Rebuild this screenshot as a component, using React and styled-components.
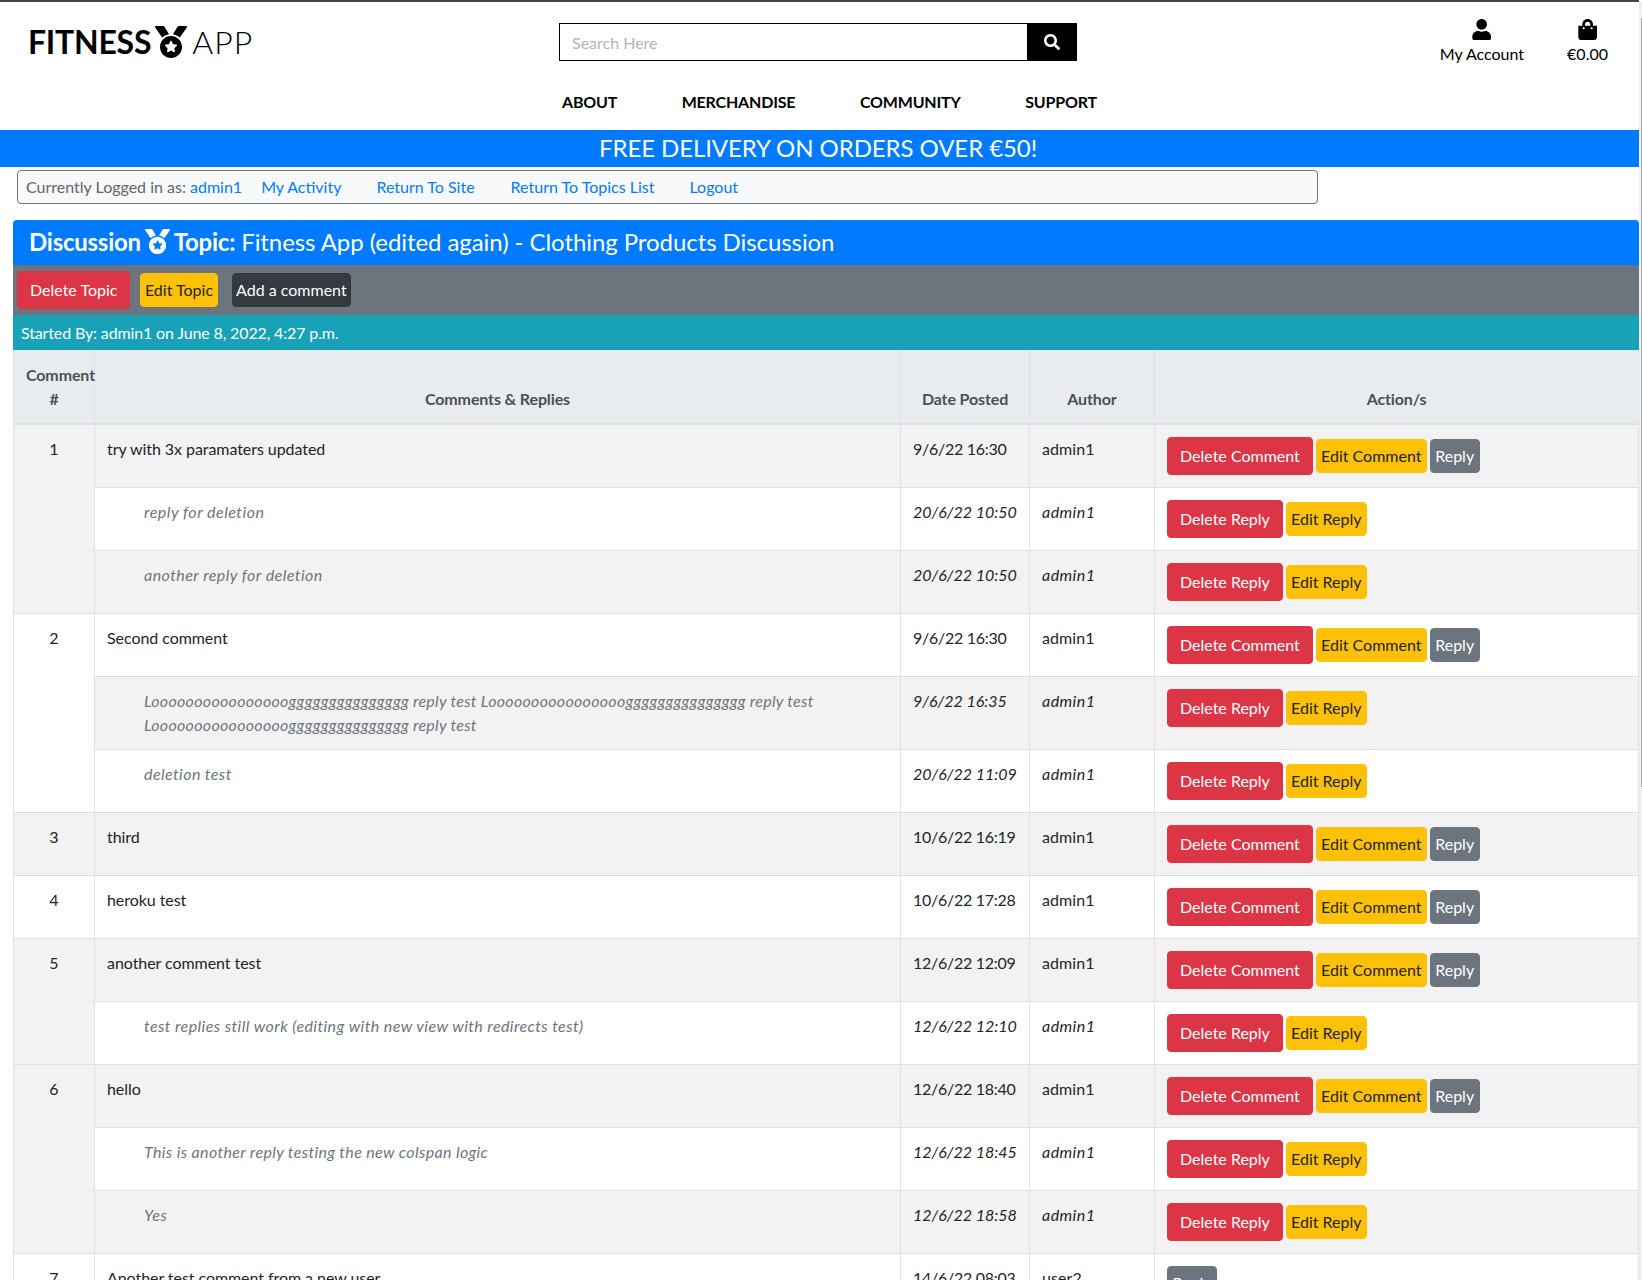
import React from 'react';
import styled, { createGlobalStyle } from 'styled-components';
import { FaMedal, FaSearch, FaUser, FaShoppingBag } from 'react-icons/fa';

const Global = createGlobalStyle`
  html, body { margin: 0; padding: 0; height: 1280px; overflow: hidden; background: #fff; }
  body { font-family: Lato, "Liberation Sans", sans-serif; font-size: 16px; line-height: 24px; color: #212529; }
  * { box-sizing: border-box; }
`;

const Page = styled.div`
  width: 1639px;
  border-top: 2px solid #444;
`;
const ScrollTrack = styled.div`
  position: fixed; top: 2px; right: 0; width: 3px; bottom: 0; background: #f0f0f0;
`;
const ScrollThumb = styled.div`
  position: absolute; top: 16px; right: 0; width: 1px; height: 769px; background: #a8a8a8;
`;

const Header = styled.header`
  display: grid;
  grid-template-columns: 559px 518px 1fr;
  grid-template-rows: 85px 43px;
  height: 128px;
`;
const Logo = styled.a`
  display: flex; align-items: center; gap: 4px;
  padding: 23px 0 0 28px; height: 57px;
  font-size: 32px; line-height: 32px; color: #000;
`;
const LogoStrong = styled.span` font-weight: 700; letter-spacing: -0.25px; `;
const LogoLight = styled.span` font-weight: 300; letter-spacing: 1px; margin-left: 1px; `;
const LogoMedal = styled(FaMedal)` font-size: 32px; `;

const SearchCol = styled.div` grid-column: 2; padding-top: 21px; `;
const SearchForm = styled.form` display: flex; height: 38px; border: 1px solid #000; border-right: 0; `;
const SearchInput = styled.input`
  flex: 1; min-width: 0; border: 0; outline: 0; padding: 2px 12px 0;
  font: 16px/24px Lato, sans-serif; color: #495057;
  &::placeholder { color: #adb5bd; opacity: 1; }
`;
const SearchButton = styled.button`
  width: 50px; margin: -1px 0; border: 0; background: #000; color: #fff; padding: 0;
  display: flex; align-items: center; justify-content: center; font-size: 16px;
`;
const Account = styled.div`
  grid-column: 3; display: flex; justify-content: flex-end; gap: 43px; padding: 16px 31px 0 0; color: #000;
`;
const AccountLink = styled.a`
  display: flex; flex-direction: column; align-items: center; line-height: 24px;
  svg { font-size: 21.33px; margin: 1px 0 2px; }
`;
const Nav = styled.nav`
  grid-column: 1 / -1; display: flex; gap: 64.5px; padding: 3px 0 0 562px;
`;
const NavLink = styled.a`
  font-weight: 700; font-size: 16px; color: #000; text-transform: uppercase; line-height: 24px; letter-spacing: -0.18px;
`;

const Banner = styled.div`
  background: #007bff; color: #fff; height: 37px; display: flex; align-items: center; justify-content: center;
  font-size: 24px; line-height: 35px; padding: 0 3px 2px 0; letter-spacing: -0.08px;
`;

const UserBar = styled.div`
  width: 1301px; height: 34px; margin: 3px 0 16px 17px; padding: 0 8px;
  display: flex; align-items: center; background: #f8f9fa; border: 1px solid #6c757d; border-radius: 4px;
`;
const UserLabel = styled.span` color: #5f666d; `;
const UserLink = styled.a` color: #007bff; margin-left: ${p => p.$gap}px; `;

const Section = styled.main` margin-left: 13px; `;
const TopicTitle = styled.h1`
  margin: 0; height: 45px; padding: 0 16px 2px; background: #007bff; color: #fff;
  border-radius: 4px 4px 0 0; display: flex; align-items: center; gap: 4px;
  font-size: 24px; font-weight: 400; line-height: 43px; white-space: pre;
`;
const TitleStrong = styled.strong` font-weight: 700; letter-spacing: -0.25px; `;
const TitleRest = styled.span` letter-spacing: -0.07px; `;
const TitleMedal = styled(FaMedal)` font-size: 25px; `;
const ActionBar = styled.div`
  height: 50px; background: #6c757d; padding: 6px 4px; display: flex; align-items: center; gap: 10px;
`;
const Btn = styled.button`
  display: inline-block; font: 400 16px/24px Lato, sans-serif; white-space: nowrap; text-align: center;
  border-radius: 4px; border: 1px solid ${p => p.$bg};
  background: ${p => p.$bg}; color: ${p => p.$fg};
  padding: ${p => p.$big ? '6px 12px' : p.$tight ? '4px 3.5px' : '4px'};
`;
const Danger = (p) => <Btn $bg="#dc3545" $fg="#fff" $big {...p} />;
const Warn = (p) => <Btn $bg="#ffc107" $fg="#212529" {...p} />;
const ReplyBtn = styled(Btn)` min-width: 50px; `;
const Grey = (p) => <ReplyBtn $bg="#6c757d" $fg="#fff" {...p} />;
const AddComment = styled(Btn)` margin-left: 4px; `;

const Started = styled.div`
  height: 35px; background: #17a2b8; color: #fff; padding: 0 8px; display: flex; align-items: center; letter-spacing: -0.14px;
`;
const Table = styled.table`
  width: 100%; table-layout: fixed; border-collapse: collapse; color: #212529;
  border-left: 1px solid #dee2e6;
`;
const Th = styled.th`
  background: #e9ecef; color: #495057; font-weight: 700; text-align: center; vertical-align: bottom;
  padding: 13px 12px 12px; border: 1px solid #dee2e6; border-top: 0; border-bottom-width: 2px; letter-spacing: -0.12px;
`;
const Tr = styled.tr` background: ${p => p.$striped ? '#f2f2f2' : '#fff'}; `;
const Td = styled.td`
  padding: 12px; vertical-align: top; border: 1px solid #dee2e6;
  text-align: ${p => p.$center ? 'center' : 'left'};
`;
const CommentCell = styled(Td)` letter-spacing: -0.06px; `;
const DateCell = styled(Td)`
  white-space: nowrap;
  font-style: ${p => p.$reply ? 'italic' : 'normal'};
  letter-spacing: ${p => p.$reply ? '0' : '-0.27px'};
`;
const AuthorCell = styled(Td)`
  font-style: ${p => p.$reply ? 'italic' : 'normal'};
  letter-spacing: ${p => p.$reply ? '0.45px' : '0.1px'};
`;
const ReplyText = styled.div`
  padding-left: 37px; color: #6c757d; font-style: italic;
  letter-spacing: ${p => p.$tracking}px;
`;
const ActionGroup = styled.div` display: flex; align-items: center; gap: 3.2px; `;

const groups = [
  { n: 1, text: 'try with 3x paramaters updated', date: '9/6/22 16:30', author: 'admin1', replies: [
    ['reply for deletion', '20/6/22 10:50', 'admin1', 0.5],
    ['another reply for deletion', '20/6/22 10:50', 'admin1', 0.45],
  ]},
  { n: 2, text: 'Second comment', date: '9/6/22 16:30', author: 'admin1', replies: [
    ['Looooooooooooooooggggggggggggggg reply test Looooooooooooooooggggggggggggggg reply test Looooooooooooooooggggggggggggggg reply test', '9/6/22 16:35', 'admin1', 0.28],
    ['deletion test', '20/6/22 11:09', 'admin1', 0.42],
  ]},
  { n: 3, text: 'third', date: '10/6/22 16:19', author: 'admin1', replies: [] },
  { n: 4, text: 'heroku test', date: '10/6/22 17:28', author: 'admin1', replies: [] },
  { n: 5, text: 'another comment test', date: '12/6/22 12:09', author: 'admin1', replies: [
    ['test replies still work (editing with new view with redirects test)', '12/6/22 12:10', 'admin1', 0.41],
  ]},
  { n: 6, text: 'hello', date: '12/6/22 18:40', author: 'admin1', replies: [
    ['This is another reply testing the new colspan logic', '12/6/22 18:45', 'admin1', 0.35],
    ['Yes', '12/6/22 18:58', 'admin1', 0.5],
  ]},
  { n: 7, text: 'Another test comment from a new user', date: '14/6/22 08:03', author: 'user2', replyOnly: true, replies: [] },
];

function rows() {
  let i = 0;
  const out = [];
  groups.forEach((g) => {
    out.push(
      <Tr key={g.n} $striped={i % 2 === 0}>
        <Td $center rowSpan={g.replies.length + 1}>{g.n}</Td>
        <CommentCell>{g.text}</CommentCell>
        <DateCell>{g.date}</DateCell>
        <AuthorCell>{g.author}</AuthorCell>
        <Td>
          <ActionGroup>
            {g.replyOnly ? <Grey>Reply</Grey> : <>
              <Danger>Delete Comment</Danger><Warn>Edit Comment</Warn><Grey>Reply</Grey>
            </>}
          </ActionGroup>
        </Td>
      </Tr>
    );
    i++;
    g.replies.forEach((r, k) => {
      out.push(
        <Tr key={g.n + '-' + k} $striped={i % 2 === 0}>
          <Td><ReplyText $tracking={r[3]}>{r[0]}</ReplyText></Td>
          <DateCell $reply>{r[1]}</DateCell>
          <AuthorCell $reply>{r[2]}</AuthorCell>
          <Td><ActionGroup><Danger>Delete Reply</Danger><Warn>Edit Reply</Warn></ActionGroup></Td>
        </Tr>
      );
      i++;
    });
  });
  return out;
}

export default function App() {
  return (
    <Page>
      <Global />
      <ScrollTrack><ScrollThumb /></ScrollTrack>
      <Header>
        <Logo>
          <LogoStrong>FITNESS</LogoStrong>
          <LogoMedal />
          <LogoLight>APP</LogoLight>
        </Logo>
        <SearchCol>
          <SearchForm>
            <SearchInput placeholder="Search Here" />
            <SearchButton type="button" aria-label="Search"><FaSearch /></SearchButton>
          </SearchForm>
        </SearchCol>
        <Account>
          <AccountLink><FaUser /><span>My Account</span></AccountLink>
          <AccountLink><FaShoppingBag /><span>€0.00</span></AccountLink>
        </Account>
        <Nav>
          <NavLink>About</NavLink>
          <NavLink>Merchandise</NavLink>
          <NavLink>Community</NavLink>
          <NavLink>Support</NavLink>
        </Nav>
      </Header>
      <Banner>FREE DELIVERY ON ORDERS OVER €50!</Banner>
      <UserBar>
        <UserLabel>Currently Logged in as:&nbsp;</UserLabel>
        <UserLink $gap={0}>admin1</UserLink>
        <UserLink $gap={19}>My Activity</UserLink>
        <UserLink $gap={35}>Return To Site</UserLink>
        <UserLink $gap={36}>Return To Topics List</UserLink>
        <UserLink $gap={35}>Logout</UserLink>
      </UserBar>
      <Section>
        <TopicTitle>
          <TitleStrong>Discussion</TitleStrong>
          <TitleMedal />
          <span><TitleStrong>Topic:</TitleStrong><TitleRest> Fitness App (edited again) - Clothing Products Discussion</TitleRest></span>
        </TopicTitle>
        <ActionBar>
          <Danger>Delete Topic</Danger>
          <Btn $bg="#ffc107" $fg="#212529" $tight>Edit Topic</Btn>
          <AddComment $bg="#343a40" $fg="#fff" $tight>Add a comment</AddComment>
        </ActionBar>
        <Started>Started By: admin1 on June 8, 2022, 4:27 p.m.</Started>
        <Table>
          <colgroup>
            <col style={{ width: 81 }} />
            <col style={{ width: 806 }} />
            <col style={{ width: 129 }} />
            <col style={{ width: 125 }} />
            <col />
          </colgroup>
          <thead>
            <tr>
              <Th>Comment #</Th>
              <Th>Comments &amp; Replies</Th>
              <Th>Date Posted</Th>
              <Th>Author</Th>
              <Th>Action/s</Th>
            </tr>
          </thead>
          <tbody>{rows()}</tbody>
        </Table>
      </Section>
    </Page>
  );
}
